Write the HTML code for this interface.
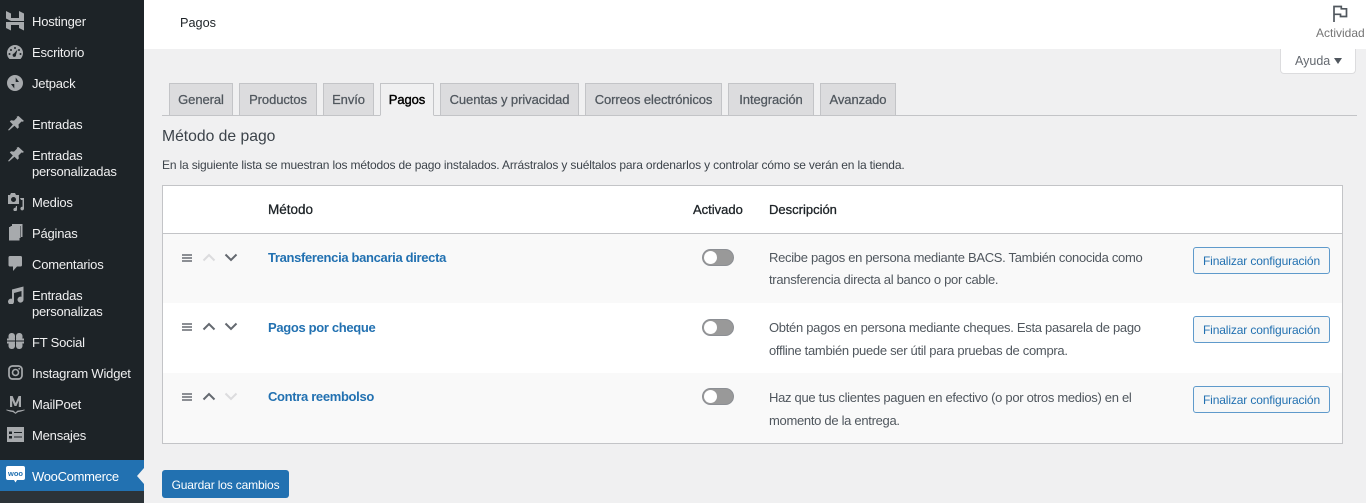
<!DOCTYPE html>
<html lang="es"><head><meta charset="utf-8"><title>Pagos</title>
<style>
html,body{margin:0;padding:0}
body{width:1366px;height:503px;overflow:hidden;background:#f0f0f1;position:relative;font-family:"Liberation Sans",sans-serif;font-size:13px;color:#3c434a}
.a,.m,.t,.tab,.btn,.i{position:absolute;white-space:nowrap}
#side{position:absolute;left:0;top:0;width:144px;height:503px;background:#1d2327}
.m{left:32px;color:#f0f0f1;font-size:13px;letter-spacing:-.2px;line-height:16px}
.i{left:6px;width:20px;height:20px;fill:#a7aaad}
#top{position:absolute;left:144px;top:0;width:1222px;height:49px;background:#fff}
.tab{top:83px;height:32px;box-sizing:border-box;background:#dcdcde;border:1px solid #c3c4c7;border-bottom:none;color:#50575e;font-size:13px;letter-spacing:-.08px;line-height:32px;text-align:center;font-weight:400;-webkit-text-stroke:.25px #50575e}
.tab.on{background:#f0f0f1;color:#000;height:33px;border-bottom:1px solid #f0f0f1;z-index:2;-webkit-text-stroke:.4px #000}
.row{position:absolute;left:163px;width:1179px}
.t{color:#2271b1;font-weight:700;font-size:13px;letter-spacing:-.33px;left:268px}
.d{position:absolute;left:769px;color:#50575e;font-size:13px;letter-spacing:-.3px;line-height:23px;white-space:nowrap}
.btn{left:1193px;width:137px;height:27px;box-sizing:border-box;border:1px solid #5f9acb;border-radius:3px;color:#2271b1;background:#f6f7f7;font-size:12px;letter-spacing:-.13px;line-height:26px;text-align:center}
.tg{position:absolute;left:702px;width:32px;height:17px;border-radius:9px;background:#999;border:1px solid #8c8f94;box-sizing:border-box}
.tg:after{content:"";position:absolute;left:1px;top:1px;width:13px;height:13px;border-radius:50%;background:#fff}
.ar{position:absolute;width:14px;height:9px;fill:none;stroke-width:2}
.dr{position:absolute;left:182px;width:10px;height:8px;background:repeating-linear-gradient(#8c8f94 0,#8c8f94 2px,transparent 2px,transparent 3px)}
</style></head><body>
<div id="side">
<svg class="i" style="left:5px;top:10px;width:20px;height:21px" viewBox="0 0 20 21"><path d="M1 1l5 2.500V8l8 0V1l5 2.500V11H6L1 8.500zM1 12l5 0h13v8.500l-5-2.500V15H6v5.500L1 18z"/></svg>
<div class="m" style="top:14px">Hostinger</div>
<svg class="i" style="top:43px;left:6px;width:18px;height:18px" viewBox="0 0 18 18"><path fill-rule="evenodd" d="M9 2a8 8 0 0 1 8 8c0 2.300-1 4.400-2.500 6h-11A8 8 0 0 1 1 10a8 8 0 0 1 8-8zM9 4a1 1 0 1 0 0 2 1 1 0 0 0 0-2zM5 6a1 1 0 1 0 0 2 1 1 0 0 0 0-2zM13 6a1 1 0 1 0 0 2 1 1 0 0 0 0-2zM3.500 10a1 1 0 1 0 0 2 1 1 0 0 0 0-2zM14.500 10a1 1 0 1 0 0 2 1 1 0 0 0 0-2zM11.500 6.500L8 10.500a1.700 1.700 0 1 0 2 1.500z"/></svg>
<div class="m" style="top:45px">Escritorio</div>
<svg class="i" style="top:75px;left:7px;width:16px;height:16px" viewBox="0 0 16 16"><path fill-rule="evenodd" d="M8 0a8 8 0 1 1 0 16A8 8 0 0 1 8 0zM8.700 2.500V7H12zM7.300 13.500V9H4z"/></svg>
<div class="m" style="top:76px">Jetpack</div>
<svg class="i" style="top:115px;left:7px;width:18px;height:18px" viewBox="0 0 18 18"><path d="M11.500 1l5.500 5-1.500.8-1-.3-3 3 .3 3-1.300 1.300-3-3L2 15.500 1 15l4.800-5.500-3-3L4 5.300l3 .3 3-3-.3-1z"/></svg>
<div class="m" style="top:117px">Entradas</div>
<svg class="i" style="top:146px;left:7px;width:18px;height:18px" viewBox="0 0 18 18"><path d="M11.500 1l5.500 5-1.500.8-1-.3-3 3 .3 3-1.300 1.300-3-3L2 15.500 1 15l4.800-5.500-3-3L4 5.300l3 .3 3-3-.3-1z"/></svg>
<div class="m" style="top:148px">Entradas<br>personalizadas</div>
<svg class="i" style="top:192px;left:7px;width:18px;height:19px" viewBox="0 0 18 19"><path fill-rule="evenodd" d="M4 1h4l1 2h3v9H1V3h2zM6.500 5a2.500 2.500 0 1 0 0 5 2.500 2.500 0 0 0 0-5zM9 14h1v3.500a1.800 1.800 0 1 1-1.500-1.700zM13 6h4v10.500a1.800 1.800 0 1 1-1.500-1.700V8H14z"/></svg>
<div class="m" style="top:195px">Medios</div>
<svg class="i" style="top:224px;left:8px;width:15px;height:17px" viewBox="0 0 15 17"><path d="M4 0h10.500v13H13V2H4zM1 3h10.500v13.500H1z"/><path d="M2.500 2h10v12h-2V3.500h-8z"/></svg>
<div class="m" style="top:226px">Páginas</div>
<svg class="i" style="top:255px;left:8px;width:15px;height:17px" viewBox="0 0 15 17"><path d="M2 1h10.500A1.500 1.500 0 0 1 14 2.500V10a1.500 1.500 0 0 1-1.500 1.500H9L5 16v-4.500H2A1.500 1.500 0 0 1 .5 10V2.500A1.500 1.500 0 0 1 2 1z"/></svg>
<div class="m" style="top:257px">Comentarios</div>
<svg class="i" style="top:286px;left:7px;width:17px;height:18px" viewBox="0 0 17 18"><path d="M5 3.500L16.500 .5v13a3 3 0 1 1-2-2.700V5L7 7v8.500a3 3 0 1 1-2-2.700z"/></svg>
<div class="m" style="top:288px">Entradas<br>personalizas</div>
<svg class="i" style="top:333px;left:7px;width:17px;height:16px" viewBox="0 0 17 16"><rect x="1.500" y="0" width="6.500" height="7.500" rx="3"/><rect x="9" y="0" width="6.500" height="7.500" rx="3"/><rect x="1.500" y="8.500" width="6.500" height="7.500" rx="3"/><rect x="9" y="8.500" width="6.500" height="7.500" rx="3"/><rect x="0" y="5.500" width="8" height="2"/><rect x="9" y="5.500" width="8" height="2"/><rect x="0" y="8.500" width="8" height="2"/><rect x="9" y="8.500" width="8" height="2"/></svg>
<div class="m" style="top:335px">FT Social</div>
<svg class="i" style="top:365px;left:8px;width:15px;height:15px" viewBox="0 0 15 15"><rect x="1" y="1" width="13" height="13" rx="3.500" fill="none" stroke="#a7aaad" stroke-width="1.700"/><circle cx="7.500" cy="7.500" r="3" fill="none" stroke="#a7aaad" stroke-width="1.600"/><circle cx="11.200" cy="3.800" r=".9"/></svg>
<div class="m" style="top:366px">Instagram Widget</div>
<svg class="i" style="top:395px;left:6px;width:19px;height:19px" viewBox="0 0 19 19"><path d="M4 1h2.600l3 7 3-7H15v11h-2.200V5.500L10.500 11h-2L6.200 5.500V12H4z"/><path d="M.5 14.500c3 .8 5.500 1 7 1.100L9.500 17.500l2-1.900c1.500-.1 4-.3 7-1.100l.2.800c-3 1.200-5.300 1.700-6.700 1.800l-2.500 1.800L7 17.100C5.500 17 3.200 16.500.3 15.300z"/></svg>
<div class="m" style="top:397px">MailPoet</div>
<svg class="i" style="top:427px;left:7px;width:17px;height:15px" viewBox="0 0 17 15"><path fill-rule="evenodd" d="M0 0h17v15H0zM2 4.500V7h3V4.500zM7 5v1h8V5zM2 9v2.500h3V9zM7 9.500v1h8v-1z"/></svg>
<div class="m" style="top:428px">Mensajes</div>
<div style="position:absolute;left:0;top:460px;width:144px;height:31px;background:#2271b1"></div>
<div style="position:absolute;left:0;top:491px;width:144px;height:12px;background:#2c3338"></div>
<svg style="position:absolute;left:6px;top:466px;width:19px;height:18px" viewBox="0 0 19 18"><path fill="#fff" d="M2 0h15a2 2 0 0 1 2 2v10a2 2 0 0 1-2 2h-6l-1.500 2.500L8 14H2a2 2 0 0 1-2-2V2a2 2 0 0 1 2-2z"/><text x="9.500" y="10" font-size="7.500" font-weight="700" fill="#2271b1" text-anchor="middle" font-family="Liberation Sans">woo</text></svg>
<div class="m" style="top:469px;color:#fff;letter-spacing:-.3px">WooCommerce</div>
<div style="position:absolute;left:137px;top:468px;width:0;height:0;border:8px solid transparent;border-left:0;border-right:7px solid #f0f0f1"></div>
</div>

<div id="top"></div>
<div class="a" style="left:180px;top:15px;font-size:12.7px;color:#1d2327;line-height:16px">Pagos</div>
<svg class="a" style="left:1332px;top:5px;width:16px;height:18px" viewBox="0 0 16 18"><path d="M2 17V1.500h7.300v2.300H14.500v7.700H8.500V9.300H2" fill="none" stroke="#50575e" stroke-width="1.700"/></svg>
<div class="a" style="left:1316px;top:26px;font-size:12px;color:#757575;line-height:15px">Actividad</div>
<div class="a" style="left:1280px;top:49px;width:76px;height:25px;box-sizing:border-box;background:#fff;border:1px solid #dcdcde;border-top:none;border-radius:0 0 4px 4px"></div>
<div class="a" style="left:1295px;top:54px;font-size:12.5px;color:#646970;line-height:15px">Ayuda</div>
<div class="a" style="left:1334px;top:58px;width:0;height:0;border:4px solid transparent;border-bottom:0;border-top:6px solid #50575e"></div>

<div class="a" style="left:162px;top:115px;width:1195px;height:1px;background:#c3c4c7"></div>
<div class="tab" style="left:169px;width:64px">General</div>
<div class="tab" style="left:239px;width:78px">Productos</div>
<div class="tab" style="left:323px;width:51px">Envío</div>
<div class="tab on" style="left:380px;width:54px">Pagos</div>
<div class="tab" style="left:440px;width:139px">Cuentas y privacidad</div>
<div class="tab" style="left:585px;width:137px">Correos electrónicos</div>
<div class="tab" style="left:728px;width:86px">Integración</div>
<div class="tab" style="left:820px;width:76px">Avanzado</div>

<div class="a" style="left:162px;top:127px;font-size:15.7px;line-height:19px;color:#3c434a">Método de pago</div>
<div class="a" style="left:162px;top:158px;font-size:12px;letter-spacing:-.165px;line-height:15px;color:#3c434a">En la siguiente lista se muestran los métodos de pago instalados. Arrástralos y suéltalos para ordenarlos y controlar cómo se verán en la tienda.</div>

<div class="a" style="left:162px;top:185px;width:1181px;height:259px;box-sizing:border-box;background:#fff;border:1px solid #c3c4c7"></div>
<div class="a" style="left:163px;top:233px;width:1179px;height:1px;background:#c3c4c7"></div>
<div class="row" style="top:234px;height:69px;background:#f9f9f9"></div>
<div class="row" style="top:373px;height:70px;background:#f9f9f9"></div>
<div class="a" style="left:268px;top:202px;font-size:13.5px;color:#1d2327;line-height:16px;-webkit-text-stroke:.3px #1d2327">Método</div>
<div class="a" style="left:693px;top:202px;font-size:13px;color:#1d2327;line-height:16px;-webkit-text-stroke:.3px #1d2327">Activado</div>
<div class="a" style="left:769px;top:202px;font-size:13px;color:#1d2327;line-height:16px;-webkit-text-stroke:.3px #1d2327">Descripción</div>

<div class="dr" style="top:254px"></div>
<svg class="ar" style="left:202px;top:253px" viewBox="0 0 14 9"><path d="M1.500 7.500L7 2l5.500 5.500" stroke="#dcdcde"/></svg>
<svg class="ar" style="left:224px;top:253px" viewBox="0 0 14 9"><path d="M1.500 1.500L7 7l5.500-5.500" stroke="#646970"/></svg>
<div class="t" style="top:250px;line-height:16px">Transferencia bancaria directa</div>
<div class="tg" style="top:249px"></div>
<div class="d" style="top:247px;line-height:22px">Recibe pagos en persona mediante BACS. También conocida como<br>transferencia directa al banco o por cable.</div>
<div class="btn" style="top:247px">Finalizar configuración</div>

<div class="dr" style="top:323px"></div>
<svg class="ar" style="left:202px;top:322px" viewBox="0 0 14 9"><path d="M1.500 7.500L7 2l5.500 5.500" stroke="#646970"/></svg>
<svg class="ar" style="left:224px;top:322px" viewBox="0 0 14 9"><path d="M1.500 1.500L7 7l5.500-5.500" stroke="#646970"/></svg>
<div class="t" style="top:320px;line-height:16px">Pagos por cheque</div>
<div class="tg" style="top:319px"></div>
<div class="d" style="top:316px">Obtén pagos en persona mediante cheques. Esta pasarela de pago<br>offline también puede ser útil para pruebas de compra.</div>
<div class="btn" style="top:316px">Finalizar configuración</div>

<div class="dr" style="top:393px"></div>
<svg class="ar" style="left:202px;top:392px" viewBox="0 0 14 9"><path d="M1.500 7.500L7 2l5.500 5.500" stroke="#646970"/></svg>
<svg class="ar" style="left:224px;top:392px" viewBox="0 0 14 9"><path d="M1.500 1.500L7 7l5.500-5.500" stroke="#dcdcde"/></svg>
<div class="t" style="top:389px;line-height:16px">Contra reembolso</div>
<div class="tg" style="top:388px"></div>
<div class="d" style="top:386px">Haz que tus clientes paguen en efectivo (o por otros medios) en el<br>momento de la entrega.</div>
<div class="btn" style="top:386px">Finalizar configuración</div>

<div class="a" style="left:162px;top:470px;width:127px;height:28px;background:#2271b1;border-radius:3px;color:#fff;font-size:12px;letter-spacing:-.15px;line-height:30px;text-align:center">Guardar los cambios</div>
</body></html>
